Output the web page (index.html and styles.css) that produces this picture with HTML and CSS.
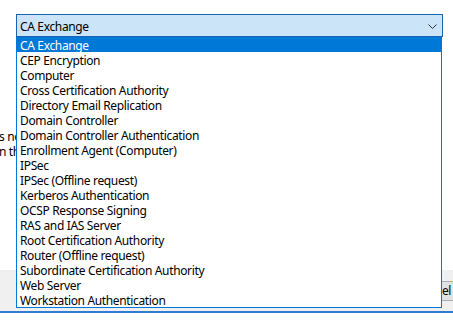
FILE: index.html
```html
<!DOCTYPE html>
<html>
<head>
<meta charset="utf-8">
<link rel="stylesheet" href="styles.css">
</head>
<body>
<div class="window">
  <div class="content">
    <div class="combo">
      <span class="combo-text">CA Exchange</span>
      <svg class="chevron" width="9" height="5" viewBox="0 0 9 5"><path d="M0.5 0.5 L4.5 4.5 L8.5 0.5" fill="none" stroke="#333" stroke-width="1"/></svg>
    </div>
    <div class="behind">
      <div>s no</div>
      <div>n th</div>
    </div>
  </div>
  <div class="footer">
    <button class="btn">OK</button>
    <button class="btn">Cancel</button>
  </div>
  <div class="bottom-line"></div>

  <ul class="list">
    <li class="sel">CA Exchange</li>
    <li>CEP Encryption</li>
    <li>Computer</li>
    <li>Cross Certification Authority</li>
    <li>Directory Email Replication</li>
    <li>Domain Controller</li>
    <li>Domain Controller Authentication</li>
    <li>Enrollment Agent (Computer)</li>
    <li>IPSec</li>
    <li>IPSec (Offline request)</li>
    <li>Kerberos Authentication</li>
    <li>OCSP Response Signing</li>
    <li>RAS and IAS Server</li>
    <li>Root Certification Authority</li>
    <li>Router (Offline request)</li>
    <li>Subordinate Certification Authority</li>
    <li>Web Server</li>
    <li>Workstation Authentication</li>
  </ul>
</div>
</body>
</html>
```
FILE: styles.css
```css
html, body {
  margin: 0;
  padding: 0;
  background: #fff;
  overflow: hidden;
}
body {
  font-family: "Noto Sans", "Open Sans", sans-serif;
  font-size: 12px;
  letter-spacing: -0.35px;
  color: #000;
  width: 453px;
  height: 323px;
}
.window {
  position: relative;
  width: 453px;
  height: 323px;
  display: flex;
  flex-direction: column;
  overflow: hidden;
}
.content {
  height: 270px;
  background: #fff;
  padding: 14px 0 0 16px;
  box-sizing: border-box;
}
.combo {
  width: 427px;
  height: 23px;
  box-sizing: border-box;
  border: 1px solid #1565b0;
  background: #cce4f7;
  display: flex;
  align-items: center;
  justify-content: space-between;
  padding: 1px 5px 0 3px;
}
.combo-text {
  line-height: 15px;
}
.chevron {
  display: block;
}
.behind {
  margin: 92px 0 0 -17px;
  line-height: 15px;
  white-space: nowrap;
}
.footer {
  height: 41px;
  background: #f0f0f0;
  display: flex;
  gap: 8px;
  padding: 11px 0 0 313px;
  box-sizing: border-box;
}
.btn {
  width: 75px;
  height: 20px;
  flex: none;
  background: #e1e1e1;
  border: 1px solid #adadad;
  font-family: inherit;
  font-size: 12px;
  letter-spacing: -0.35px;
  padding: 0;
  margin: 0;
  line-height: 16px;
  color: #000;
}
.bottom-line {
  height: 2px;
  background: #2f7cd0;
}
.list {
  position: absolute;
  left: 16px;
  top: 37px;
  width: 426px;
  box-sizing: border-box;
  margin: 0;
  padding: 0;
  list-style: none;
  background: #fff;
  border: 1px solid #0078d7;
  border-top: none;
}
.list li {
  height: 14px;
  padding-top: 1px;
  line-height: 15px;
  padding-left: 3px;
  white-space: nowrap;
}
.list li.sel {
  background: #0078d7;
  color: #fff;
  margin: 0 -1px;
  padding-left: 4px;
}
```
